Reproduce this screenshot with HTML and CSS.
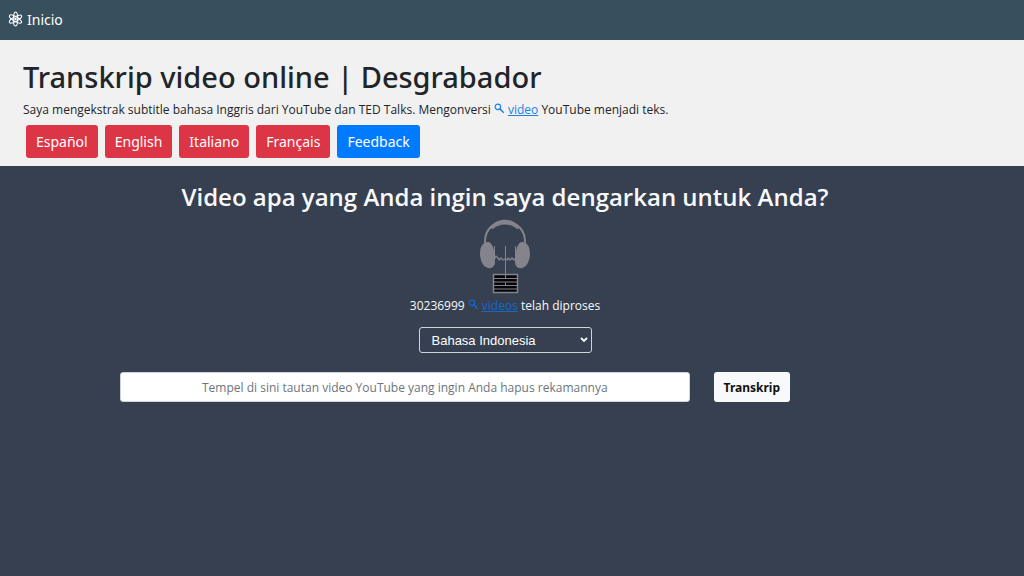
FILE: index.html
```html
<!DOCTYPE html>
<html lang="id">
<head>
<meta charset="utf-8">
<meta name="viewport" content="width=device-width, initial-scale=1">
<title>Transkrip video online | Desgrabador</title>
<link rel="stylesheet" href="styles.css">
</head>
<body>
<nav class="navbar">
  <a class="brand" href="#">
    <svg class="brand-icon" viewBox="0 0 16 16" aria-hidden="true">
      <g fill="none" stroke="currentColor" stroke-width="1.1">
        <ellipse cx="8" cy="8" rx="2.4" ry="7.4"/>
        <ellipse cx="8" cy="8" rx="2.4" ry="7.4" transform="rotate(60 8 8)"/>
        <ellipse cx="8" cy="8" rx="2.4" ry="7.4" transform="rotate(120 8 8)"/>
      </g>
      <circle cx="8" cy="8" r="1.3" fill="currentColor"/>
    </svg>
    <span>Inicio</span>
  </a>
</nav>
<header class="intro">
  <h1 class="title">Transkrip video online | Desgrabador</h1>
  <p class="lead">Saya mengekstrak subtitle bahasa Inggris dari YouTube dan TED Talks. Mengonversi
    <a class="keyword" href="#"><svg class="search-icon" viewBox="0 0 12 12" aria-hidden="true"><circle cx="4.2" cy="4.2" r="3" fill="none" stroke="currentColor" stroke-width="1.3"/><path d="M6.4 6.4 10.6 10.6" stroke="currentColor" stroke-width="1.6"/></svg><span class="keyword-text">video</span></a>
    YouTube menjadi teks.</p>
  <div class="languages">
    <a class="btn btn-danger" href="#">Español</a>
    <a class="btn btn-danger" href="#">English</a>
    <a class="btn btn-danger" href="#">Italiano</a>
    <a class="btn btn-danger" href="#">Français</a>
    <a class="btn btn-primary" href="#">Feedback</a>
  </div>
</header>
<main class="main">
  <h2 class="question">Video apa yang Anda ingin saya dengarkan untuk Anda?</h2>
  <svg class="logo" viewBox="0 0 52 76" role="img" aria-label="Desgrabador">
    <path d="M6.500 27C4 13 13 2.500 26 2.500S48 13 45.500 27" fill="none" stroke="#85838c" stroke-width="2"/>
    <path d="M11 9C15 3 20 .8 26 .8s11 2.200 15 8.200l-3 1C35 7 31 5.500 26 5.500S17 7 14 10z" fill="#85838c"/>
    <path d="M9 23c3 0 5 4 6 9l1 11c0 4-3 7-7 6C4 48 1 41 1 35c0-6 2-12 8-12z" fill="#85838c"/>
    <path d="M43 23c-3 0-5 4-6 9l-1 11c0 4 3 7 7 6 5-1 8-8 8-14 0-6-2-12-8-12z" fill="#85838c"/>
    <path d="M15.500 27v14M26.500 27v29M36.500 27v14" fill="none" stroke="#85838c" stroke-width="1"/>
    <path d="M15 41l2-4 2 2 1 2 2-2 2 2 2-1 2 1 1-2 2 2 2-2 2 2 2-2" fill="none" stroke="#85838c" stroke-width="1.300"/>
    <rect x="14.500" y="55.500" width="24" height="18" fill="#050507" stroke="#85838c" stroke-width="1.500"/>
    <path d="M15 59.500h23M15 63h23M15 66.500h23M15 70h23M26.500 56v4M26.500 63v3" stroke="#85838c" stroke-width="1"/>
  </svg>
  <p class="counter">30236999
    <a class="keyword" href="#"><svg class="search-icon" viewBox="0 0 12 12" aria-hidden="true"><circle cx="4.200" cy="4.200" r="3" fill="none" stroke="currentColor" stroke-width="1.300"/><path d="M6.400 6.400 10.600 10.600" stroke="currentColor" stroke-width="1.600"/></svg><span class="keyword-text">videos</span></a>
    telah diproses</p>
  <div class="select-wrap">
    <select class="select" aria-label="Bahasa">
      <option>Bahasa Indonesia</option>
      <option>English</option>
      <option>Español</option>
    </select>
    <svg class="chevron" viewBox="0 0 8 6" aria-hidden="true"><path d="M1 1l3 3 3-3" fill="none" stroke="currentColor" stroke-width="1.800"/></svg>
  </div>
  <form class="form">
    <input class="url" type="text" aria-label="Tautan video YouTube" placeholder="Tempel di sini tautan video YouTube yang ingin Anda hapus rekamannya">
    <button class="submit" type="button">Transkrip</button>
  </form>
</main>
</body>
</html>
```
FILE: styles.css
```css
* {
  box-sizing: border-box;
}

body {
  display: flex;
  flex-direction: column;
  min-height: 100vh;
  margin: 0;
  background: #364051;
  font-family: "Open Sans", "Noto Sans", sans-serif;
  font-size: 12px;
  color: #212529;
}

.navbar,
.title,
.languages,
.submit {
  font-family: "Noto Sans", "Open Sans", sans-serif;
}

.navbar {
  display: flex;
  align-items: center;
  height: 40px;
  padding: 0 8px 2px;
  background: #38505d;
}

.brand {
  display: flex;
  align-items: center;
  gap: 4px;
  font-size: 14px;
  color: #fff;
  text-decoration: none;
}

.brand-icon {
  width: 15px;
  height: 16px;
}

.intro {
  padding: 18px 23px 8px;
  background: #f1f1f1;
}

.title {
  margin: 0;
  font-size: 29px;
  font-weight: 500;
  line-height: 38px;
}

.lead {
  margin: 5px 0 7px;
  font-size: 12px;
  font-weight: 500;
  line-height: 17px;
}

.keyword {
  color: #1c80e3;
  text-decoration: none;
}

.keyword-text {
  text-decoration: underline;
}

.search-icon {
  width: 11px;
  height: 11px;
  margin-right: 3px;
}

.languages {
  display: flex;
  flex-wrap: wrap;
  gap: 7px;
  padding-left: 3px;
}

.btn {
  padding: 0 10px;
  border-radius: 3px;
  font-size: 14px;
  line-height: 33px;
  color: #fff;
  text-decoration: none;
}

.btn-danger {
  background: #dc3546;
}

.btn-primary {
  background: #007bff;
}

.main {
  display: flex;
  flex-direction: column;
  align-items: center;
  padding: 13px 14px 24px 0;
  color: #f8f9fa;
}

.question {
  margin: 0;
  font-size: 24px;
  font-weight: 600;
  line-height: 36px;
  text-align: center;
}

.logo {
  width: 52px;
  height: 76px;
  margin-top: 4px;
}

.counter {
  margin: 2px 0 12px;
  line-height: 18px;
}

.counter .keyword {
  color: #1467cc;
}

.select-wrap {
  display: grid;
  align-items: center;
  width: 173px;
}

.select {
  grid-area: 1 / 1;
  width: 100%;
  height: 26px;
  padding: 0 24px 0 12px;
  appearance: none;
  border: 1px solid #ced4da;
  border-radius: 3px;
  background: transparent;
  font-family: "Liberation Sans", Arial, sans-serif;
  font-size: 13px;
  color: #fff;
}

.chevron {
  grid-area: 1 / 1;
  justify-self: end;
  width: 8px;
  height: 6px;
  margin-right: 4px;
  pointer-events: none;
}

.form {
  display: flex;
  gap: 24px;
  width: 100%;
  margin-top: 19px;
  padding: 0 220px 0 120px;
}

.url {
  flex: 1;
  min-width: 0;
  height: 30px;
  padding: 0 10px;
  border: 1px solid #ced4da;
  border-radius: 3px;
  background: #fff;
  font: inherit;
  text-align: center;
}

.url::placeholder {
  color: #6c757d;
  opacity: 1;
}

.submit {
  height: 30px;
  padding: 0 10px;
  border: 0;
  border-radius: 3px;
  background: #f8f9fa;
  font-size: 12px;
  font-weight: 700;
  color: #111;
}

@media (max-width: 700px) {
  .form {
    padding: 0 16px;
  }
}
```
